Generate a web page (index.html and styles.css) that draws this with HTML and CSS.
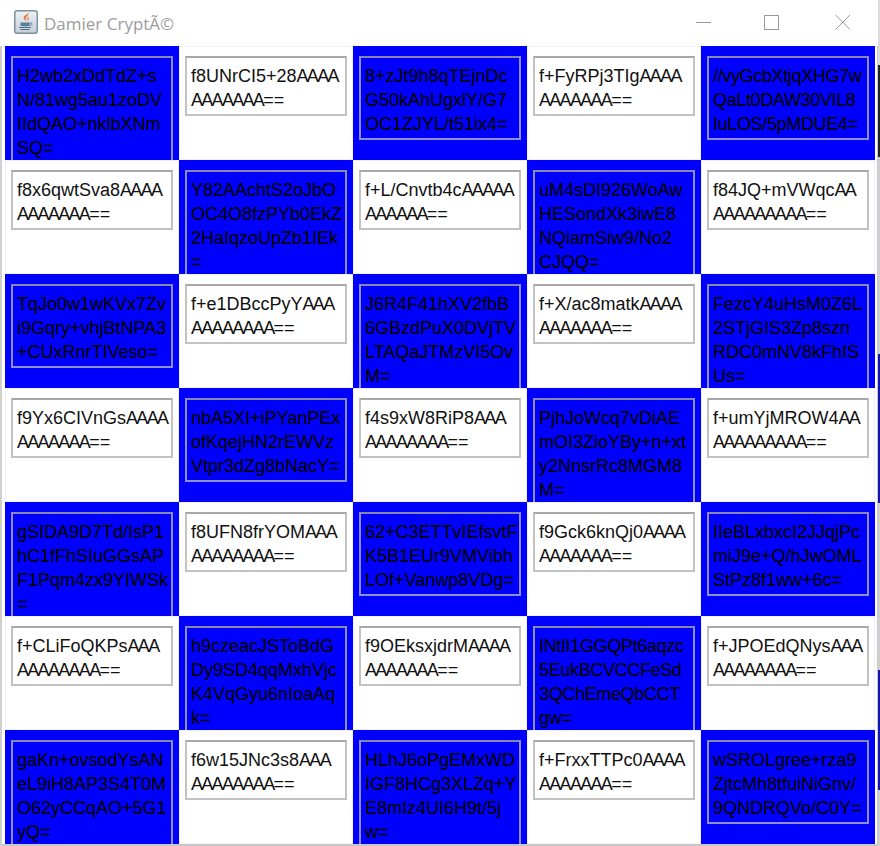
FILE: index.html
```html
<!DOCTYPE html>
<html lang="en">
<head>
    <meta charset="UTF-8">
    <meta name="viewport" content="width=device-width, initial-scale=1.0">
    <title>Damier CryptÃ©</title>
    <link rel="stylesheet" href="styles.css">
</head>
<body>
    <div class="screen">
    <div class="window">
        <header class="titlebar">
            <svg class="app-icon" width="24" height="24" viewBox="0 0 24 24">
                <defs>
                    <linearGradient id="tile" x1="0" y1="0" x2="0" y2="1">
                        <stop offset="0" stop-color="#eef2f5"/>
                        <stop offset="1" stop-color="#c3ced8"/>
                    </linearGradient>
                </defs>
                <rect x="0.75" y="0.75" width="22.5" height="22.5" rx="2.5" fill="url(#tile)" stroke="#7f929f" stroke-width="1.5"/>
                <path d="M14.5 3c1 2.2-3.6 3.6-2.8 6.2.2.7.7 1.3 1.1 1.8-2.2-1-3.7-2.4-3-4.2.6-1.6 3.6-2.2 4.7-3.8z" fill="#e8772e"/>
                <path d="M15 6.5c-1.4.8-2.2 1.5-1.8 2.6.2.6.5 1 .4 1.7 1-.7 1.2-1.3 1-2-.2-.8-.2-1.4.4-2.3z" fill="#e8772e"/>
                <path d="M6.5 12.5h9v2.2c0 1-.8 1.6-1.8 1.6H8.3c-1 0-1.8-.6-1.8-1.6z" fill="#5b7f9a"/>
                <path d="M15.5 13h1.7c1.2 0 1.3 2-.3 2.2l-1.6.2" fill="none" stroke="#5b7f9a" stroke-width="1"/>
                <path d="M5 17.5h12M6.5 19.5h9" stroke="#4d7089" stroke-width="1.2"/>
            </svg>
            <span class="app-title">Damier CryptÃ©</span>
            <div class="controls">
                <svg class="control" width="46" height="30" viewBox="0 0 46 30"><path d="M18 15.5h15" stroke="#9a9a9a" fill="none"/></svg>
                <svg class="control" width="46" height="30" viewBox="0 0 46 30"><rect x="15.5" y="8.5" width="14" height="14" stroke="#9a9a9a" fill="none"/></svg>
                <svg class="control" width="46" height="30" viewBox="0 0 46 30"><path d="M15.5 8l14.5 14.5M30 8L15.5 22.5" stroke="#9a9a9a" fill="none"/></svg>
            </div>
        </header>

        <main class="board">
            <div class="cell dark"><div class="field">H2wb2xDdTdZ+s<br>N/81wg5au1zoDV<br>IIdQAO+nklbXNm<br>SQ=</div></div>
            <div class="cell"><div class="field">f8UNrCI5+28<span class="aa">AAAA</span><br><span class="aa">AAAAAAA</span>==</div></div>
            <div class="cell dark"><div class="field">8+zJt9h8qTEjnDc<br>G50kAhUgxlY/G7<br>OC1ZJYL/t51ix4=</div></div>
            <div class="cell"><div class="field">f+FyRPj3TIg<span class="aa">AAAA</span><br><span class="aa">AAAAAAA</span>==</div></div>
            <div class="cell dark"><div class="field tight">//vyGcbXtjqXHG7w<br>QaLt0DAW30VIL8<br>IuLOS/5pMDUE4=</div></div>

            <div class="cell"><div class="field">f8x6qwtSva8<span class="aa">AAAA</span><br><span class="aa">AAAAAAA</span>==</div></div>
            <div class="cell dark"><div class="field">Y82AAchtS2oJbO<br>OC4O8fzPYb0EkZ<br>2HaIqzoUpZb1IEk<br>=</div></div>
            <div class="cell"><div class="field">f+L/Cnvtb4c<span class="aa">AAAAA</span><br><span class="aa">AAAAAA</span>==</div></div>
            <div class="cell dark"><div class="field">uM4sDI926WoAw<br>HESondXk3iwE8<br>NQiamSiw9/No2<br>CJQQ=</div></div>
            <div class="cell"><div class="field">f84JQ+mVWqc<span class="aa">AA</span><br><span class="aa">AAAAAAAAA</span>==</div></div>

            <div class="cell dark"><div class="field">TqJo0w1wKVx7Zv<br>i9Gqry+vhjBtNPA3<br>+CUxRnrTIVeso=</div></div>
            <div class="cell"><div class="field">f+e1DBccPyY<span class="aa">AAA</span><br><span class="aa">AAAAAAAA</span>==</div></div>
            <div class="cell dark"><div class="field">J6R4F41hXV2fbB<br>6GBzdPuX0DVjTV<br>LTAQaJTMzVI5Ov<br>M=</div></div>
            <div class="cell"><div class="field">f+X/ac8matk<span class="aa">AAAA</span><br><span class="aa">AAAAAAA</span>==</div></div>
            <div class="cell dark"><div class="field">FezcY4uHsM0Z6L<br>2STjGIS3Zp8szn<br>RDC0mNV8kFhIS<br>Us=</div></div>

            <div class="cell"><div class="field">f9Yx6CIVnGs<span class="aa">AAAA</span><br><span class="aa">AAAAAAA</span>==</div></div>
            <div class="cell dark"><div class="field">nbA5XI+iPYanPEx<br>ofKqejHN2rEWVz<br>Vtpr3dZg8bNacY=</div></div>
            <div class="cell"><div class="field">f4s9xW8RiP8<span class="aa">AAA</span><br><span class="aa">AAAAAAAA</span>==</div></div>
            <div class="cell dark"><div class="field">PjhJoWcq7vDiAE<br>mOI3ZioYBy+n+xt<br>y2NnsrRc8MGM8<br>M=</div></div>
            <div class="cell"><div class="field">f+umYjMROW4<span class="aa">AA</span><br><span class="aa">AAAAAAAAA</span>==</div></div>

            <div class="cell dark"><div class="field">gSIDA9D7Td/IsP1<br>hC1fFhSIuGGsAP<br>F1Pqm4zx9YIWSk<br>=</div></div>
            <div class="cell"><div class="field">f8UFN8frYOM<span class="aa">AAA</span><br><span class="aa">AAAAAAAA</span>==</div></div>
            <div class="cell dark"><div class="field">62+C3ETTvIEfsvtF<br>K5B1EUr9VMVibh<br>LOf+Vanwp8VDg=</div></div>
            <div class="cell"><div class="field">f9Gck6knQj0<span class="aa">AAAA</span><br><span class="aa">AAAAAAA</span>==</div></div>
            <div class="cell dark"><div class="field">IIeBLxbxcI2JJqjPc<br>miJ9e+Q/hJwOML<br>StPz8f1ww+6c=</div></div>

            <div class="cell"><div class="field">f+CLiFoQKPs<span class="aa">AAA</span><br><span class="aa">AAAAAAAA</span>==</div></div>
            <div class="cell dark"><div class="field">h9czeacJSToBdG<br>Dy9SD4qqMxhVjc<br>K4VqGyu6nIoaAq<br>k=</div></div>
            <div class="cell"><div class="field">f9OEksxjdrM<span class="aa">AAAA</span><br><span class="aa">AAAAAAA</span>==</div></div>
            <div class="cell dark"><div class="field tight">INtII1GGQPt6aqzc<br>5EukBCVCCFeSd<br>3QChEmeQbCCT<br>gw=</div></div>
            <div class="cell"><div class="field">f+JPOEdQNys<span class="aa">AAA</span><br><span class="aa">AAAAAAAA</span>==</div></div>

            <div class="cell dark"><div class="field">gaKn+ovsodYsAN<br>eL9iH8AP3S4T0M<br>O62yCCqAO+5G1<br>yQ=</div></div>
            <div class="cell"><div class="field">f6w15JNc3s8<span class="aa">AAA</span><br><span class="aa">AAAAAAAA</span>==</div></div>
            <div class="cell dark"><div class="field">HLhJ6oPgEMxWD<br>IGF8HCg3XLZq+Y<br>E8mIz4UI6H9t/5j<br>w=</div></div>
            <div class="cell"><div class="field">f+FrxxTTPc0<span class="aa">AAAA</span><br><span class="aa">AAAAAAA</span>==</div></div>
            <div class="cell dark"><div class="field">wSROLgree+rza9<br>ZjtcMh8tfuiNiGnv/<br>9QNDRQVo/C0Y=</div></div>
        </main>
    </div>
    <div class="desktop-edge"></div>
    </div>
</body>
</html>
```

FILE: styles.css
```css
body {
    margin: 0;
    background-color: #fff;
    font-family: "Liberation Sans", Arial, sans-serif;
    overflow: hidden;
}
.screen {
    display: flex;
    width: 880px;
    height: 846px;
    overflow: hidden;
}
.window {
    width: 878px;
    flex: none;
}
.desktop-edge {
    width: 2px;
    background: linear-gradient(to bottom,
        #dcdcdc 0 65px, #222 65px 157px, #cfcfcf 157px 354px,
        #1414b0 354px 503px, #cfcfcf 503px 670px,
        #1414b0 670px 790px, #cfcfcf 790px);
}
.titlebar {
    display: flex;
    align-items: center;
    height: 46px;
    padding-left: 14px;
}
.app-icon {
    margin-top: -2px;
    flex: none;
}
.app-title {
    margin-left: 6px;
    font-family: "Open Sans", "Noto Sans", sans-serif;
    font-size: 17px;
    color: #9c9c9c;
}
.controls {
    display: flex;
    margin-left: auto;
    margin-right: 12px;
    margin-top: -2px;
}
.control {
    margin-left: 25px;
}
.board {
    display: grid;
    grid-template-columns: repeat(5, 174px);
    grid-auto-rows: 114px;
    height: 800px;
    box-sizing: border-box;
    padding-left: 3px;
    border-left: 2px solid #cfcfcf;
    border-right: 1px solid #c8c8c8;
    border-bottom: 2px solid #c8c8c8;
}
.cell {
    padding: 10px 6px 0;
    background-color: #fff;
    overflow: hidden;
    box-shadow: inset 0 0 0 1px #f0f0ff;
}
.cell.dark {
    background-color: #0000ff;
    box-shadow: none;
}
.field {
    box-sizing: border-box;
    padding: 6px 4px 2px;
    border: 2px solid #c2c2c2;
    border-top-color: #a8a8a8;
    font-size: 18px;
    line-height: 24px;
    color: #111;
    white-space: nowrap;
    background-color: #fff;
}
.aa {
    letter-spacing: -1.7px;
}
.tight {
    letter-spacing: -0.35px;
}
.dark .field {
    border-color: #8f8fd0;
    border-top-color: #8686ae;
    background-color: #0000ff;
    color: #000;
    -webkit-text-stroke: 0.15px #000;
}
```
